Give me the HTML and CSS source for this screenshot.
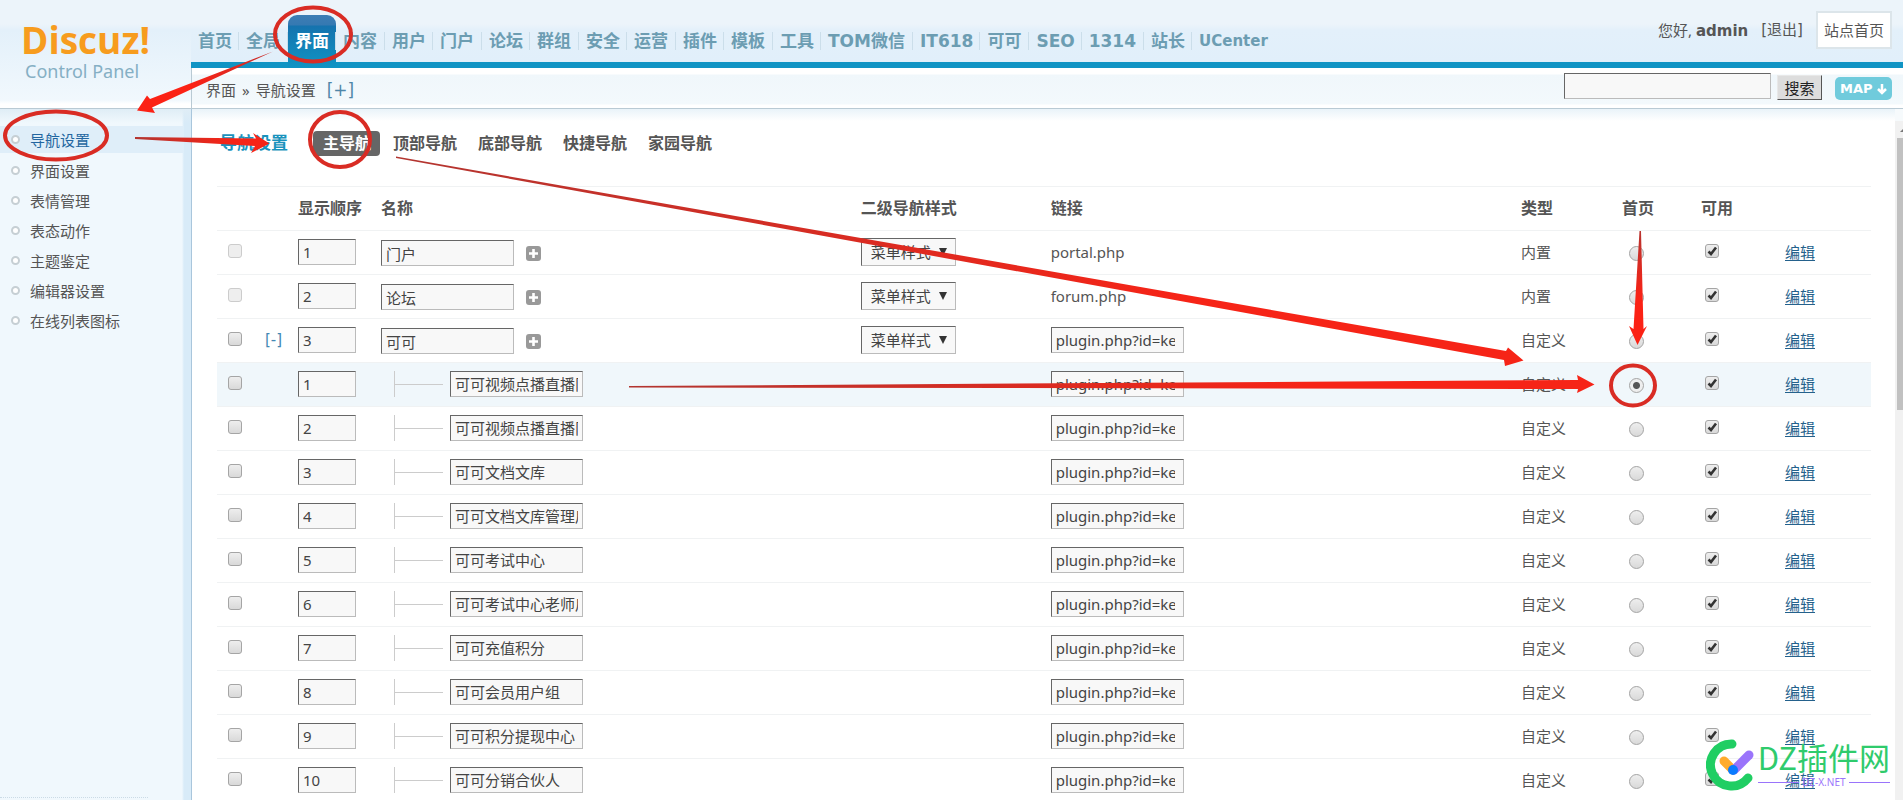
FILE: index.html
```html
<!DOCTYPE html>
<html lang="zh-CN">
<head>
<meta charset="utf-8">
<title>Discuz! Control Panel</title>
<link rel="stylesheet" href="styles.css">
</head>
<body>
<div class="app">
  <header class="top">
    <div class="brand">
      <div class="brand-name">Discuz!</div>
      <div class="brand-sub">Control Panel</div>
    </div>
    <div class="top-main">
      <div class="navbar">
        <nav class="menu" id="menu"></nav>
        <div class="user">
          <span>您好, <b>admin</b></span>
          <a class="bracket" href="#">[退出]</a>
          <a class="site-home" href="#">站点首页</a>
        </div>
      </div>
      <div class="crumbs">
        <div class="path"><span>界面</span><span>»</span><span>导航设置</span><a class="bracket" href="#">[+]</a></div>
        <form class="search">
          <input class="search-box" type="text" aria-label="搜索">
          <button class="search-btn" type="button">搜索</button>
          <button class="map" type="button">MAP
            <svg width="10" height="12" viewBox="0 0 10 12"><path d="M5 1v9M1 6l4 4 4-4" fill="none" stroke="#fff" stroke-width="2.500"/></svg>
          </button>
        </form>
      </div>
    </div>
  </header>
  <div class="body">
    <aside class="side">
      <ul class="side-list">
        <li class="on"><a href="#">导航设置</a></li>
        <li><a href="#">界面设置</a></li>
        <li><a href="#">表情管理</a></li>
        <li><a href="#">表态动作</a></li>
        <li><a href="#">主题鉴定</a></li>
        <li><a href="#">编辑器设置</a></li>
        <li><a href="#">在线列表图标</a></li>
      </ul>
      <div class="side-foot"></div>
    </aside>
    <main class="content">
      <div class="tabs">
        <h1>导航设置</h1>
        <a class="tab on" href="#">主导航</a>
        <a class="tab" href="#">顶部导航</a>
        <a class="tab" href="#">底部导航</a>
        <a class="tab" href="#">快捷导航</a>
        <a class="tab" href="#">家园导航</a>
      </div>
      <table class="grid">
        <colgroup><col class="c-del"><col class="c-fold"><col class="c-order"><col class="c-name"><col class="c-style"><col><col class="c-type"><col class="c-home"><col class="c-use"><col class="c-edit"></colgroup>
        <thead><tr><th></th><th></th><th>显示顺序</th><th>名称</th><th>二级导航样式</th><th>链接</th><th>类型</th><th>首页</th><th>可用</th><th></th></tr></thead>
        <tbody id="rows"></tbody>
      </table>
    </main>
    <div class="scroll">
      <svg class="scroll-up" width="8" height="17" viewBox="0 0 8 17"><path d="M3 11l5-5v5z" fill="#777"/></svg>
      <div class="scroll-thumb"></div>
    </div>
  </div>
  <div class="watermark">
    <svg width="50" height="54" viewBox="0 0 50 54">
      <path d="M26 6A21 21 0 1 0 42 40" fill="none" stroke="#20ce63" stroke-width="9" stroke-linecap="round"/>
      <path d="M18 23l9 9" stroke="#ffab2d" stroke-width="9" stroke-linecap="round"/>
      <path d="M28 32L43 17" stroke="#9a74fb" stroke-width="9" stroke-linecap="round"/>
      <circle cx="27" cy="32" r="5" fill="#0a7bff"/>
    </svg>
    <div class="wm-text">
      <div class="wm-name">DZ插件网</div>
      <div class="wm-sub">DZ-X.NET</div>
    </div>
  </div>
  <svg class="marks" viewBox="0 0 1903 800">
    <defs>
      <linearGradient id="g1" x1="1" x2="0" y1="0" y2="0"><stop offset="0" stop-color="#c62f2c"/><stop offset=".6" stop-color="#fb2215"/></linearGradient>
      <linearGradient id="g2"><stop offset="0" stop-color="#b23530"/><stop offset=".7" stop-color="#f62417"/></linearGradient>
      <linearGradient id="g3" x1="0" x2="0" y1="0" y2="1"><stop offset="0" stop-color="#b8332f"/><stop offset=".6" stop-color="#fb2215"/></linearGradient>
    </defs>
    <g fill="none" stroke="#d92c24" stroke-width="4">
      <ellipse cx="313" cy="34.500" rx="38" ry="27"/>
      <ellipse cx="56" cy="135.500" rx="51" ry="24"/>
      <ellipse cx="340" cy="139.500" rx="30" ry="27.500"/>
      <ellipse cx="1633" cy="385.500" rx="22" ry="20"/>
    </g>
    <path fill="url(#g1)" d="M273 51.500L150 99 147 95.500 137 110.500 155 113 152 107.500Z"/>
    <path fill="url(#g2)" d="M135 137L256 138.500 253 133 269.500 143.500 251 153 255 146 135 139Z"/>
    <path fill="url(#g2)" d="M396 156.500L1506 351 1508 347.500 1523.500 360.500 1505 366 1504 360 396 158Z"/>
    <path fill="url(#g2)" d="M629 386L1578 380 1577 375 1594.500 384.500 1577 393 1578 389 629 387.500Z"/>
    <path fill="url(#g3)" d="M1639.500 231L1633.500 329 1629 326 1637.500 345 1647 326 1643.500 329 1641 231Z"/>
  </svg>
</div>
<script src="app.js"></script>
</body>
</html>
```

FILE: styles.css
```css
*, *::before, *::after { box-sizing: border-box; }
body {
  margin: 0;
  font: 15px/20px "Noto Sans", "Noto Sans CJK SC", sans-serif;
  color: #555;
  background: #fff;
  overflow: hidden;
}
a { color: inherit; text-decoration: none; }
.app { position: relative; height: 100vh; overflow: hidden; display: flex; flex-direction: column; }

.top { display: flex; flex: none; border-bottom: 1px solid #b9cad4; background: linear-gradient(#ecf4fa 0, #ecf4fa 24px, #e3f0fa 30px, #f1f8fd 100px, #fff 104px); }
.brand { width: 191px; padding: 21px 0 0 21px; }
.brand-name { font: bold 37px/38px "Open Sans", "Noto Sans", sans-serif; color: #f79c1e; }
.brand-sub { font-size: 18px; line-height: 25px; color: #85afc4; padding-left: 4px; }
.top-main { flex: 1; min-width: 0; }
.navbar { display: flex; justify-content: space-between; height: 68px; border-bottom: 6px solid #1094c4; background: linear-gradient(#ecf4fa 0, #ecf4fa 24px, #e3f0fa 30px, #e1effa 100%); }
.menu { display: flex; padding-top: 15px; font: bold 17px/20px "DejaVu Sans", "Noto Sans CJK SC", sans-serif; color: #6c9db2; }
.menu a { height: 53px; padding: 16px 7px 0; white-space: nowrap; }
.menu a:nth-child(even) { padding-right: 8px; }
.menu a + a::before { content: ""; float: left; width: 1px; height: 18px; margin: 1px 0 0 -8px; background: #cbdeea; }
.menu a.small { font-size: 15px; }
.menu a.on { background: linear-gradient(#3d7db4 0, #3579b2 10px, #1573ae 11px, #1094c4 100%); color: #fff; border-radius: 9px 9px 0 0; }
.bracket { font-family: "DejaVu Sans", "Noto Sans CJK SC", sans-serif; }
.user { display: flex; align-items: flex-start; gap: 13px; padding: 11px 11px 0 0; line-height: 38px; white-space: nowrap; }
.user b { font: bold 15px "DejaVu Sans", sans-serif; }
.site-home { height: 38px; padding: 0 6px; border: 2px solid #dce5ea; background: #fff; line-height: 34px; }
.crumbs { display: flex; justify-content: space-between; align-items: flex-start; height: 40px; padding: 5px 11px 0 14px; border-left: 1px solid #b9cad4; background: linear-gradient(#fff 6px, #f0f7fb 7px, #f3f9fc 36px, #fff 37px); }
.path { display: flex; gap: 6px; padding-top: 7px; }
.path a { margin-left: 5px; color: #4f86a8; font-size: 17px; }
.search { display: flex; align-items: flex-end; }
.search-box { width: 207px; height: 26px; margin: 0 6px 1px 0; }
input[type=text], select { border: 1px solid #666; border-color: #666 #bbb #bbb #666; border-radius: 0; background: #f8f8f8; color: #444; font: inherit; padding: 0 4px; outline: 0; }
.search-btn { width: 45px; height: 25px; padding: 0; border: 1px solid; border-color: #e8e8e8 #555 #555 #e8e8e8; background: #ddd; color: #222; font: inherit; line-height: 22px; margin-right: 13px; }
.map { display: flex; align-items: center; gap: 4px; width: 57px; height: 23px; padding: 0 5px; border: 0; border-radius: 5px; background: #70cbdc; color: #fff; font: bold 13px "DejaVu Sans", sans-serif; }

.body { display: flex; flex: 1; min-height: 0; }
.side { display: flex; flex-direction: column; justify-content: space-between; width: 192px; padding-top: 17px; border-right: 1px solid #a9c6dc; background: linear-gradient(#dfedf6, rgba(240, 247, 252, 0) 14px), linear-gradient(90deg, #f0f8fd 182px, #d8ebf8 184px); }
.side-list { list-style: none; margin: 0; padding: 0 8px 0 0; }
.side-list li { display: flex; align-items: center; height: 27px; margin-bottom: 3px; padding-left: 11px; gap: 10px; }
.side-list li::before { content: ""; width: 9px; height: 9px; border: 2px solid #c6cfd4; border-radius: 50%; background: #fff; }
.side-list .on { margin-bottom: 4px; background: #dfeef9; color: #2366a0; }
.side-foot { width: 148px; height: 3px; border-top: 1px dotted #cbdbe6; }
.content { flex: 1; min-width: 0; padding: 20px 24px 0 25px; background: linear-gradient(#e9f3f9, #fff 12px); }
.tabs { display: flex; align-items: center; height: 28px; margin-bottom: 29px; font-weight: bold; font-size: 16px; gap: 21px; }
.tabs h1 { margin: 0 4px 0 3px; font-size: 17px; color: #1a93bd; }
.tab { white-space: nowrap; }
.tab.on { margin-right: -8px; padding: 2px 9px 3px 10px; border-radius: 4px; background: #666; color: #fff; }

.grid { width: 100%; table-layout: fixed; border-collapse: collapse; }
.c-del { width: 48px; }
.c-fold { width: 33px; }
.c-order { width: 83px; }
.c-name { width: 29%; }
.c-style { width: 190px; }
.c-type { width: 101px; }
.c-home { width: 79px; }
.c-use { width: 84px; }
.c-edit { width: 86px; }
.grid th, .grid td { height: 44px; padding: 0 0 2px; border-top: 1px solid #f0f2f3; text-align: left; white-space: nowrap; }
.grid th { font-size: 16px; }
.grid .picked { background: #f0f7fb; }
.grid .fold { color: #4488b4; font-family: "DejaVu Sans", sans-serif; }
.order { width: 58px; height: 26px; display: block; }
.label { width: 133px; height: 26px; }
.name { display: flex; align-items: center; gap: 12px; padding-top: 3px; }
.name.child { gap: 7px; padding: 0 0 0 13px; }
.twig { width: 49px; height: 26px; border-left: 1px solid #ccc; background: linear-gradient(#ccc, #ccc) 0 13px / 100% 1px no-repeat; }
.add { display: flex; width: 15px; height: 15px; padding: 0; border: 0; background: none; }
select { appearance: none; display: block; width: 95px; height: 28px; padding: 0 20px 0 9px; }
.pick { position: relative; width: 95px; }
.pick svg { position: absolute; right: 9px; top: 10px; pointer-events: none; }
input[type=checkbox], input[type=radio] { appearance: none; display: block; margin: 0; border: 1px solid #a5a5a5; background: linear-gradient(#eee, #d9d9d9); }
input[type=checkbox] { width: 14px; height: 14px; border-radius: 3px; }
input.del[type=checkbox] { margin: 0 0 2px 11px; }
input.del:disabled { border-color: #ccc; background: #eee; }
input.use[type=checkbox] { margin: 0 0 2px 4px; }
input.use[type=checkbox]:checked { background: url("data:image/svg+xml,%3Csvg xmlns='http://www.w3.org/2000/svg' viewBox='0 0 12 12'%3E%3Cpath d='M2.500 6.500l2.500 2.500 5-6.500' fill='none' stroke='%23333' stroke-width='2.600'/%3E%3C/svg%3E"), linear-gradient(#eee, #d9d9d9); }
input.home[type=radio] { width: 15px; height: 15px; margin: 3px 0 0 7px; border-radius: 50%; }
input.home[type=radio]:checked { background: radial-gradient(#555 0, #555 3px, #eee 4px); }
input.link[type=text] { padding-right: 8px; }
.edit { color: #24618c; text-decoration: underline; text-underline-offset: 2px; }

.scroll { width: 8px; flex: none; background: #f1f1f1; border-top: 12px solid #f6fafc; padding-left: 2px; overflow: hidden; }
.scroll-up { display: block; }
.scroll-thumb { height: 40%; background: #c1c1c1; }
.watermark { position: absolute; right: 13px; bottom: 8px; display: flex; gap: 2px; }
.wm-name { font: 31px/38px "Noto Sans CJK SC", sans-serif; color: #2fcb6c; }
.wm-text { white-space: nowrap; }
.wm-sub { display: flex; align-items: center; gap: 3px; font-size: 10px; line-height: 12px; color: #9a74fb; }
.wm-sub::before, .wm-sub::after { content: ""; flex: 1; height: 1px; background: #9a74fb; }
.marks { position: absolute; left: 0; top: 0; width: 100%; height: auto; pointer-events: none; }
```

FILE: app.js
```js
const menu = ["首页", "全局", "界面", "内容", "用户", "门户", "论坛", "群组", "安全", "运营", "插件", "模板", "工具", "TOM微信", "IT618", "可可", "SEO", "1314", "站长", "UCenter"];
document.getElementById("menu").innerHTML = menu.map(m =>
  `<a href="#" class="${m === "界面" ? "on" : m === "UCenter" ? "small" : ""}">${m}</a>`).join("");

const top3 = [["门户", "portal.php"], ["论坛", "forum.php"], ["可可", ""]];
const children = ["可可视频点播直播队列", "可可视频点播直播队列", "可可文档文库", "可可文档文库管理后台", "可可考试中心", "可可考试中心老师后台", "可可充值积分", "可可会员用户组", "可可积分提现中心", "可可分销合伙人"];
const plus = '<svg width="15" height="15" viewBox="0 0 15 15"><rect width="15" height="15" rx="3" fill="#999"/><path d="M7.500 3v9M3 7.500h9" stroke="#fff" stroke-width="2.600"/></svg>';
const arrow = '<svg width="8" height="8" viewBox="0 0 8 8"><path d="M0 0h8L4 8z" fill="#333"/></svg>';
const link = '<input class="label link" type="text" aria-label="链接" value="plugin.php?id=keke_video">';

function row(r) {
  return `<tr class="${r.picked ? "picked" : ""}">
    <td><input class="del" type="checkbox" aria-label="删除" ${r.builtin ? "disabled" : ""}></td>
    <td class="fold">${r.fold ? "[-]" : ""}</td>
    <td><input class="order" type="text" aria-label="显示顺序" value="${r.order}"></td>
    <td><div class="name ${r.child ? "child" : ""}">${r.child ? '<span class="twig"></span>' : ""}<input class="label" type="text" aria-label="名称" value="${r.name}">${r.child ? "" : `<button class="add" type="button" aria-label="添加">${plus}</button>`}</div></td>
    <td>${r.child ? "" : `<div class="pick"><select aria-label="二级导航样式"><option>菜单样式</option></select>${arrow}</div>`}</td>
    <td>${r.url || link}</td>
    <td>${r.builtin ? "内置" : "自定义"}</td>
    <td><input class="home" type="radio" name="home" aria-label="首页" ${r.picked ? "checked" : ""}></td>
    <td><input class="use" type="checkbox" aria-label="可用" checked></td>
    <td><a class="edit" href="#">编辑</a></td>
  </tr>`;
}
document.getElementById("rows").innerHTML =
  top3.map(([name, url], i) => row({ name, url, order: i + 1, builtin: i < 2, fold: i === 2 })).join("") +
  children.map((name, i) => row({ name, order: i + 1, child: true, picked: i === 0 })).join("");
```
